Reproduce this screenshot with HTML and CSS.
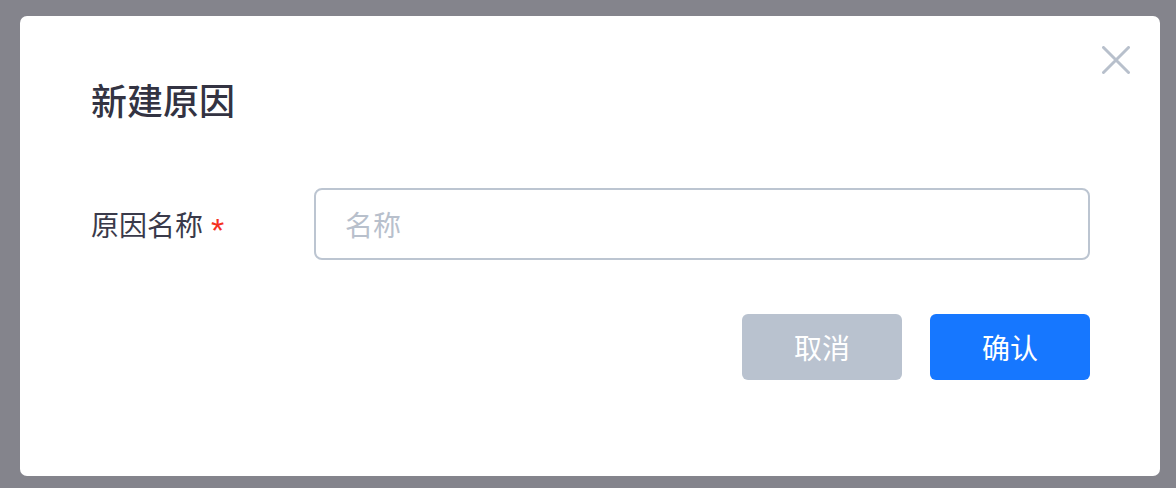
FILE: index.html
```html
<!DOCTYPE html>
<html lang="zh-CN">
<head>
<meta charset="utf-8">
<title>新建原因</title>
<link rel="stylesheet" href="styles.css">
</head>
<body>
<div class="dialog">
  <button class="close" aria-label="关闭">
    <svg width="28" height="28" viewBox="0 0 28 28" fill="none" stroke="#b8c0cc" stroke-width="3" stroke-linecap="round"><path d="M1.5 1.5 L26.5 26.5 M26.5 1.5 L1.5 26.5"/></svg>
  </button>
  <h1 class="title">新建原因</h1>
  <div class="form-row">
    <label class="label">原因名称<span class="required">*</span></label>
    <input class="input" type="text" placeholder="名称">
  </div>
  <div class="actions">
    <button class="btn btn-cancel">取消</button>
    <button class="btn btn-primary">确认</button>
  </div>
</div>
</body>
</html>
```
FILE: styles.css
```css
* { box-sizing: border-box; }
html, body { margin: 0; padding: 0; }
body {
  background: #84848c;
  font-family: "Noto Sans CJK SC", "Noto Sans", sans-serif;
  width: 1176px;
  height: 488px;
  overflow: hidden;
}
.dialog {
  position: relative;
  margin: 16px 0 0 20px;
  width: 1140px;
  height: 460px;
  background: #fff;
  border-radius: 7px;
  padding: 65px 70px 0 71px;
}
.close {
  position: absolute;
  top: 30px;
  right: 30px;
  width: 28px;
  height: 28px;
  padding: 0;
  border: 0;
  background: none;
  display: flex;
}
.title {
  margin: 0;
  font-size: 36px;
  line-height: 36px;
  font-weight: 500;
  color: #333342;
}
.form-row {
  display: flex;
  align-items: center;
  margin-top: 71px;
}
.label {
  width: 223px;
  flex: none;
  font-size: 28px;
  color: #3a3a4a;
  display: flex;
  align-items: center;
}
.required {
  color: #f5311f;
  margin-left: 8px;
  font-family: "Liberation Sans", sans-serif;
  font-size: 34px;
  line-height: 28px;
  position: relative;
  top: 6px;
}
.input {
  flex: 1;
  height: 72px;
  border: 2px solid #bcc5d1;
  border-radius: 8px;
  padding: 0 0 0 29px;
  font-family: inherit;
  font-size: 28px;
  color: #333;
  outline: none;
}
.input::placeholder { color: #b8c0cc; }
.actions {
  display: flex;
  justify-content: flex-end;
  gap: 28px;
  margin-top: 54px;
}
.btn {
  width: 160px;
  height: 66px;
  border: 0;
  border-radius: 6px;
  font-family: inherit;
  font-size: 28px;
  color: #fff;
  padding: 0;
}
.btn-cancel { background: #b9c2cf; }
.btn-primary { background: #1677ff; }
```
